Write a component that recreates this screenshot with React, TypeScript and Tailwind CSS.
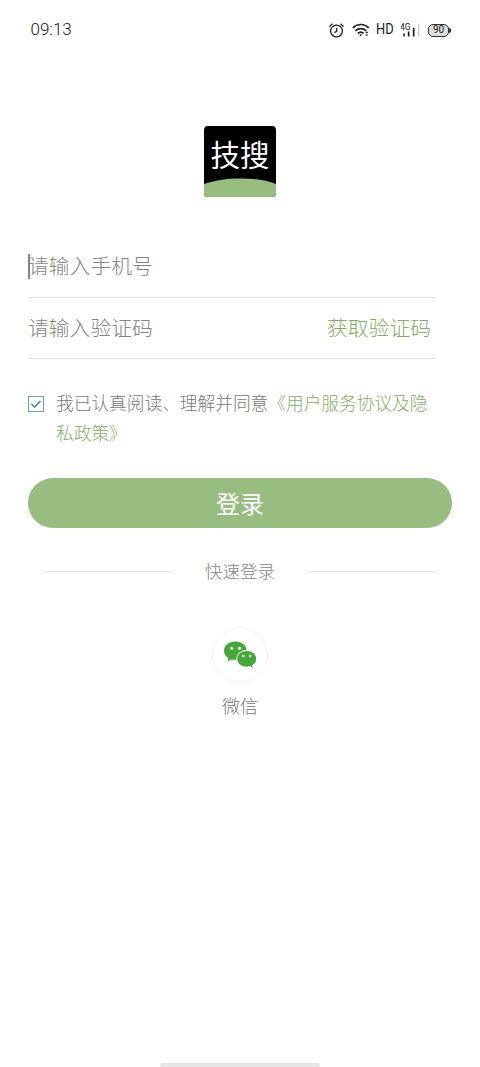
import * as React from "react";

function AlarmIcon() {
	return (
		<svg
			className="w-[15px] h-[15px]"
			viewBox="0 0 14 14"
			fill="none"
			stroke="#222"
			strokeWidth="1.2"
			strokeLinecap="round"
		>
			<circle cx="7" cy="7.5" r="5.5" />
			<path d="M7.2 4.8v3l-2 .9M.8 3 3 1M13.2 3 11 1" />
		</svg>
	);
}

function WifiIcon() {
	return (
		<svg
			className="w-[18px] h-[14px]"
			viewBox="0 0 18 14"
			fill="none"
			stroke="#222"
			strokeWidth="1.7"
		>
			<path d="M.8 4.8c4.5-4.4 11.5-4.4 16 0M3.3 7.8c3.2-3 7.800-3 11 0M5.8 10.5c1.800-1.600 4-1.600 5.800 0" />
			<path d="m7.2 11.8 1.500 1.500 1.500-1.500c-.9-.8-2.100-.8-3 0Z" fill="#222" stroke="none" />
			<path d="m13.3 10 1.500-1.700 1.500 1.700ZM13.3 11.600l1.500 1.700 1.500-1.700Z" fill="#222" stroke="none" />
		</svg>
	);
}

function SignalIcon() {
	return (
		<svg className="w-[20px] h-[16px]" viewBox="0 0 20 16">
			<text x="-1" y="7.6" fontFamily="Roboto, sans-serif" fontSize="8.5" fill="#222">
				4G
			</text>
			<path d="M2.2 11.5h1.600v3H2.200ZM6.800 9.500h1.700v5H6.800ZM11.800 5.800h1.700v8.700h-1.700Z" fill="#222" />
			<path d="M17 1.500h1.300v13H17Z" fill="#ccc" />
		</svg>
	);
}

function StatusBar() {
	return (
		<header className="flex items-center justify-between h-[60px] pl-[30.500px] pr-[29px] text-[#222]">
			<span className="text-[17px] font-light">09:13</span>
			<div className="flex items-center">
				<AlarmIcon />
				<span className="ml-[8px]">
					<WifiIcon />
				</span>
				<span className="ml-[6px] text-[15.500px] leading-none scale-x-[0.83] origin-left w-[17px]">
					HD
				</span>
				<span className="ml-[8px]">
					<SignalIcon />
				</span>
				<span className="flex items-center ml-[7px]">
					<span className="flex items-center justify-center w-[21px] h-[13px] border border-[#333] rounded-[5px] bg-[#ddd] text-[10px] leading-none">
						90
					</span>
					<span className="w-[2px] h-[5px] rounded-r-sm bg-[#333]" />
				</span>
			</div>
		</header>
	);
}

function Logo() {
	return (
		<svg className="w-[72px] h-[71px] mx-auto" viewBox="0 0 72 71">
			<rect width="72" height="71" rx="4" fill="#000" />
			<path d="M0 58C20 50.500 52 50.500 72 58v9a4 4 0 0 1-4 4H4a4 4 0 0 1-4-4Z" fill="#98bd80" />
			<text
				x="36"
				y="39.500"
				textAnchor="middle"
				fontFamily="'Noto Sans CJK SC', sans-serif"
				fontSize="29.500"
				fontWeight="400"
				fill="#fff"
			>
				技搜
			</text>
		</svg>
	);
}

function WechatIcon() {
	return (
		<svg className="w-[35px] h-[30px]" viewBox="0 0 34 28">
			<path
				d="M12 1C5.600 1 1 4.900 1 9.900c0 3 1.600 5.500 4.200 7.100L4.400 20.300l3.800-2c1.200.3 2.500.5 3.800.5 6.300 0 11-3.900 11-8.900S18.300 1 12 1Z"
				fill="#43a838"
			/>
			<path
				d="M23 9.500c-5.500 0-9.800 3.600-9.800 8.200s4.300 8.200 9.800 8.200c1.200 0 2.400-.2 3.500-.5l3.300 1.900-.9-3c2.300-1.500 3.900-3.900 3.900-6.600 0-4.600-4.300-8.200-9.800-8.200Z"
				fill="#43a838"
				stroke="#fff"
				strokeWidth="1"
			/>
			<g fill="#fff">
				<circle cx="8.500" cy="7.400" r="1.500" />
				<circle cx="16" cy="7.400" r="1.500" />
				<circle cx="19.800" cy="15" r="1.300" />
				<circle cx="26.300" cy="15" r="1.300" />
			</g>
		</svg>
	);
}

export default function LoginPage() {
	const [agreed, setAgreed] = React.useState(true);

	return (
		<div className="flex flex-col w-[480px] h-[1067px] bg-white font-['Roboto','Noto_Sans_CJK_SC',sans-serif]">
			<StatusBar />
			<main className="flex flex-col px-[28px] pt-[66px] font-light font-['Noto_Sans_CJK_SC',sans-serif]">
				<Logo />

				<div className="flex items-center w-[408px] h-[62px] mt-[39px] border-b border-[#e4e4e4] text-[20.800px] text-[#858585]">
					<span className="w-[2px] h-[25px] -mr-[2px] bg-[#858585]" />
					<span className="-mt-px">请输入手机号</span>
				</div>
				<div className="flex items-center justify-between w-[408px] h-[61px] pr-[5px] border-b border-[#e4e4e4] text-[20.800px] text-[#858585]">
					<span>请输入验证码</span>
					<button className="text-[#83b067]">获取验证码</button>
				</div>

				<div className="flex items-start mt-[29px]">
					<button
						className="flex items-center justify-center w-[16px] h-[16px] mt-[8px] mr-[12px] border border-[#6b9bc4] shrink-0"
						onClick={() => setAgreed((prev) => !prev)}
					>
						{agreed && (
							<svg
								className="w-[12px] h-[12px]"
								viewBox="0 0 12 12"
								fill="none"
								stroke="#3478b5"
								strokeWidth="1.4"
							>
								<path d="m1.500 6 3 3 6-6" />
							</svg>
						)}
					</button>
					<p className="w-[380px] -mt-px text-[17.700px] leading-[30px] text-[#777]">
						我已认真阅读、理解并同意
						<span className="text-[#83b067]">
							《用户服务协议及隐
							<br />
							私政策》
						</span>
					</p>
				</div>

				<button className="h-[50px] mt-[30.500px] rounded-full bg-[#98bd80] text-[24px] leading-none font-normal text-white">
					登录
				</button>

				<div className="flex items-center justify-between h-[30px] px-[16px] mt-[29px]">
					<span className="w-[128px] h-px bg-[#e6e6e6]" />
					<span className="text-[17.600px] text-[#858585]">快速登录</span>
					<span className="w-[128px] h-px bg-[#e6e6e6]" />
				</div>

				<button className="flex flex-col items-center self-center mt-[40.500px]">
					<span className="flex items-center justify-center w-[56px] h-[56px] border border-[#f0f0f0] rounded-full">
						<WechatIcon />
					</span>
					<span className="mt-[8px] text-[18px] leading-[28px] text-[#777]">微信</span>
				</button>
			</main>
			<div className="w-[160px] h-[4px] mx-auto mt-auto rounded-full bg-[#e6e6e6]" />
		</div>
	);
}
